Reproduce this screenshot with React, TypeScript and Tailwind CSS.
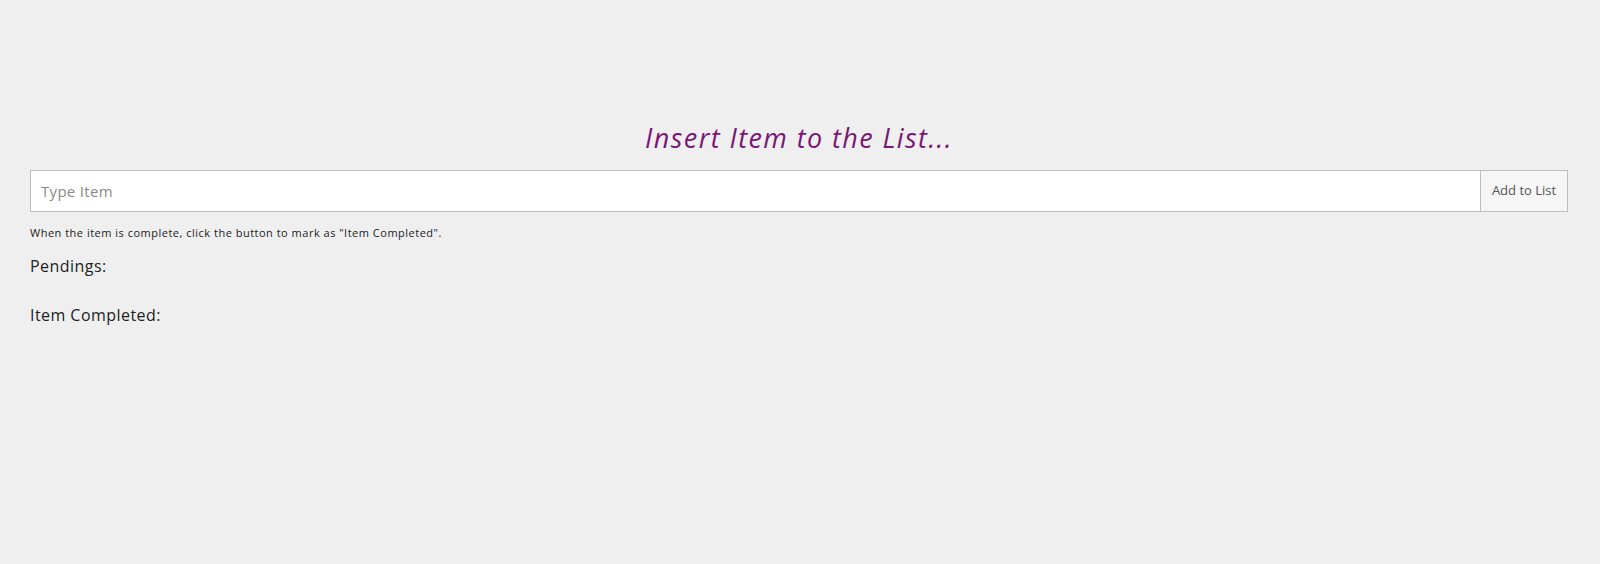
import React from "react";

export default function App() {
    return (
        <div className="min-h-[564px] w-full bg-[#efefef] pl-[30px] pr-[32px] pt-[120px] font-['Open_Sans',sans-serif] text-[#222]">
            <h1 className="text-center text-[27px] leading-[36px] italic tracking-[1.4px] text-[#7a1678]">
                Insert Item to the List...
            </h1>

            <div className="mt-[14px] flex h-[42px]">
                <input
                    type="text"
                    placeholder="Type Item"
                    className="flex-1 border border-[#bdbdbd] bg-white px-[10px] text-[15px] tracking-[0.3px] text-[#333] placeholder:text-[#8a8a8a] outline-none"
                />
                <button className="w-[87px] border border-l-0 border-[#bdbdbd] bg-[#f6f6f6] text-[13px] text-[#555]">
                    Add to List
                </button>
            </div>

            <p className="mt-[13px] text-[11px] leading-[16px] tracking-[0.5px] text-[#222]">
                When the item is complete, click the button to mark as "Item Completed".
            </p>

            <h2 className="mt-[14px] text-[16px] leading-[22px] tracking-[0.45px] text-[#222]">Pendings:</h2>
            <h2 className="mt-[27px] text-[16px] leading-[22px] tracking-[0.45px] text-[#222]">Item Completed:</h2>
        </div>
    );
}
